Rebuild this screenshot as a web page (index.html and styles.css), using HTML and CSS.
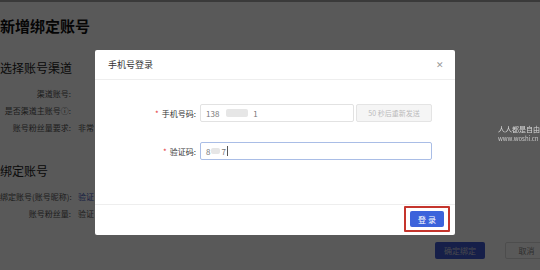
FILE: index.html
```html
<!DOCTYPE html>
<html lang="zh-CN">
<head>
  <meta charset="UTF-8">
  <title>新增绑定账号</title>
  <link rel="stylesheet" href="styles.css">
</head>
<body>
  <div class="top-strip"></div>
  <div class="page">
    <h1 class="page-title">新增绑定账号</h1>
    <div class="section">
      <h2>选择账号渠道</h2>
      <div class="row"><span class="row-label">渠道账号:</span><span class="row-value"></span></div>
      <div class="row"><span class="row-label">是否渠道主账号ⓘ:</span><span class="row-value"></span></div>
      <div class="row"><span class="row-label">账号粉丝量要求:</span><span class="row-value">非常</span></div>
    </div>
    <div class="section">
      <h2>绑定账号</h2>
      <div class="row"><span class="row-label">绑定账号(账号昵称):</span><span class="row-value link">验证</span></div>
      <div class="row"><span class="row-label">账号粉丝量:</span><span class="row-value">验证</span></div>
    </div>
    <div class="page-actions">
      <button class="btn-primary">确定绑定</button>
      <button class="btn-plain">取消</button>
    </div>
  </div>

  <div class="mask"></div>
  <div class="watermark">
    <div>人人都是自由</div>
    <div class="wm-url">www.woshi.cn</div>
  </div>

  <div class="modal">
    <div class="modal-header">
      <span class="modal-title">手机号登录</span>
      <span class="modal-close">✕</span>
    </div>
    <div class="modal-body">
      <div class="field">
        <label class="field-label"><span class="req">*</span>手机号码:</label>
        <div class="field-input phone">138<span class="blur wide"></span>1</div>
        <button class="send-btn">50 秒后重新发送</button>
      </div>
      <div class="field">
        <label class="field-label"><span class="req">*</span>验证码:</label>
        <div class="field-input code focused">8<span class="blur"></span>7<span class="caret"></span></div>
      </div>
    </div>
    <div class="modal-footer">
      <span class="highlight"><button class="login-btn">登 录</button></span>
    </div>
  </div>
</body>
</html>
```

FILE: styles.css
```css
* {
  margin: 0;
  padding: 0;
  box-sizing: border-box;
  font-family: "Noto Sans CJK SC", "Noto Sans", sans-serif;
}
body {
  width: 540px;
  height: 270px;
  overflow: hidden;
  background: #fff;
  color: #333;
}
.top-strip {
  height: 2px;
  background: #a6a6a6;
}
.page-title {
  font-size: 15px;
  font-weight: 700;
  color: #111;
  height: 48px;
  line-height: 48px;
}
.section h2 {
  font-size: 12px;
  font-weight: 400;
  color: #222;
  line-height: 18px;
  margin-bottom: 8px;
}
.section {
  margin-top: 9px;
}
.section + .section {
  margin-top: 26px;
}
.row {
  display: flex;
  align-items: center;
  height: 17px;
  font-size: 8px;
  color: #555;
  white-space: nowrap;
}
.row-label {
  width: 74px;
  text-align: right;
  padding-right: 3px;
}
.row-value {
  padding-left: 4px;
}
.row-value.link {
  color: #3a55b8;
}
.page-actions {
  display: flex;
  justify-content: flex-end;
  gap: 20px;
  margin-top: 20px;
  margin-right: -8px;
}
.page-actions button {
  height: 17px;
  font-size: 8px;
  border-radius: 2px;
}
.btn-primary {
  width: 50px;
  background: #3f5bd0;
  color: #ccd;
  border: none;
}
.btn-plain {
  width: 43px;
  background: #fff;
  color: #888;
  border: 1px solid #ddd;
}
.mask {
  position: fixed;
  inset: 0;
  background: rgba(0, 0, 0, 0.65);
}
.watermark {
  position: fixed;
  left: 498px;
  top: 125px;
  font-size: 7px;
  line-height: 9px;
  color: #d8d8d8;
  white-space: nowrap;
}
.wm-url {
  font-size: 6px;
  color: #c8c8c8;
}
.modal {
  position: fixed;
  left: 95px;
  top: 50px;
  width: 360px;
  height: 185px;
  background: #fff;
  border-radius: 2px;
  display: flex;
  flex-direction: column;
}
.modal-header {
  height: 30px;
  display: flex;
  align-items: center;
  justify-content: space-between;
  padding: 0 11px 0 13px;
  border-bottom: 1px solid #eee;
}
.modal-title {
  font-size: 9px;
  color: #333;
}
.modal-close {
  font-size: 9px;
  color: #999;
}
.modal-body {
  flex: 1;
  padding-top: 24px;
  display: flex;
  flex-direction: column;
  gap: 20px;
}
.field {
  display: flex;
  align-items: center;
  height: 18px;
}
.field-label {
  width: 101px;
  text-align: right;
  font-size: 8px;
  color: #333;
  margin-right: 4px;
}
.req {
  color: #e4393c;
  margin-right: 3px;
}
.field-input {
  height: 18px;
  border: 1px solid #e2e2e2;
  border-radius: 2px;
  display: flex;
  align-items: center;
  padding-left: 5px;
  font-size: 8px;
  color: #777;
}
.field-input.phone {
  width: 154px;
}
.field-input.code {
  width: 232px;
}
.field-input.focused {
  border-color: #a9bde6;
}
.blur {
  display: inline-block;
  width: 9px;
  height: 6px;
  margin: 0 1px;
  background: #e6e6e6;
  border-radius: 2px;
}
.blur.wide {
  width: 22px;
  height: 8px;
  margin: 0 5px 0 7px;
}
.caret {
  display: inline-block;
  width: 1px;
  height: 10px;
  margin-left: 1px;
  background: #555;
}
.send-btn {
  width: 76px;
  height: 18px;
  margin-left: 2px;
  background: #f5f5f5;
  border: 1px solid #e4e4e4;
  border-radius: 2px;
  font-size: 7px;
  color: #bbb;
}
.modal-footer {
  border-top: 1px solid #eee;
  display: flex;
  justify-content: flex-end;
  padding: 1px 5px 3px 0;
}
.highlight {
  display: inline-flex;
  border: 2px solid #c5352d;
  border-radius: 1px;
  padding: 3px 4px;
}
.login-btn {
  width: 34px;
  height: 16px;
  background: #3c63db;
  color: #fff;
  border: none;
  border-radius: 2px;
  font-size: 8px;
}
```
